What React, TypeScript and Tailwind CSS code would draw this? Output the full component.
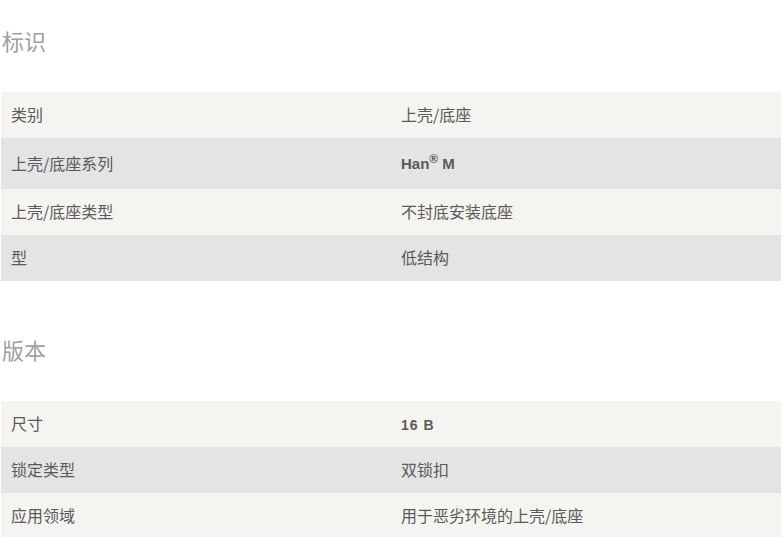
const cjk = { fontFamily: '"Noto Sans CJK SC", "Noto Sans", sans-serif' }
const latin = { fontFamily: '"Liberation Sans", Arial, sans-serif' }

type Row = { label: string; value: React.ReactNode; tall?: boolean }

const identRows: Row[] = [
    { label: '类别', value: '上壳/底座' },
    {
        label: '上壳/底座系列',
        tall: true,
        value: (
            <span className="font-bold text-[15px]" style={latin}>
                Han<sup className="text-[12px]">®</sup> M
            </span>
        ),
    },
    { label: '上壳/底座类型', value: '不封底安装底座' },
    { label: '型', value: '低结构' },
]

const versionRows: Row[] = [
    {
        label: '尺寸',
        value: (
            <span className="font-bold text-[14px] tracking-[1px]" style={latin}>
                16 B
            </span>
        ),
    },
    { label: '锁定类型', value: '双锁扣' },
    { label: '应用领域', value: '用于恶劣环境的上壳/底座' },
]

function Section({ title, rows, first }: { title: string; rows: Row[]; first?: boolean }) {
    return (
        <section className={first ? 'pt-[25px]' : 'mt-[53px]'}>
            <h2 className="pl-[2px] h-[30px] leading-[30px] text-[22px] text-[#a0a0a0] mb-[37px]">{title}</h2>
            <div className="ml-[1px] w-[780px]">
                {rows.map((row, i) => (
                    <div
                        key={row.label}
                        className={`grid grid-cols-2 items-center pb-[2px] text-[16px] text-[#5a5a5a] ${row.tall ? 'h-[51px]' : 'h-[46px]'} ${i % 2 === 0 ? 'bg-[#f5f4f1]' : 'bg-[#e4e4e4]'}`}
                    >
                        <div className="px-[10px]">{row.label}</div>
                        <div className="px-[10px]">{row.value}</div>
                    </div>
                ))}
            </div>
        </section>
    )
}

export default function App() {
    return (
        <div className="w-[783px] h-[537px] overflow-hidden bg-white" style={cjk}>
            <Section title="标识" rows={identRows} first />
            <Section title="版本" rows={versionRows} />
        </div>
    )
}
